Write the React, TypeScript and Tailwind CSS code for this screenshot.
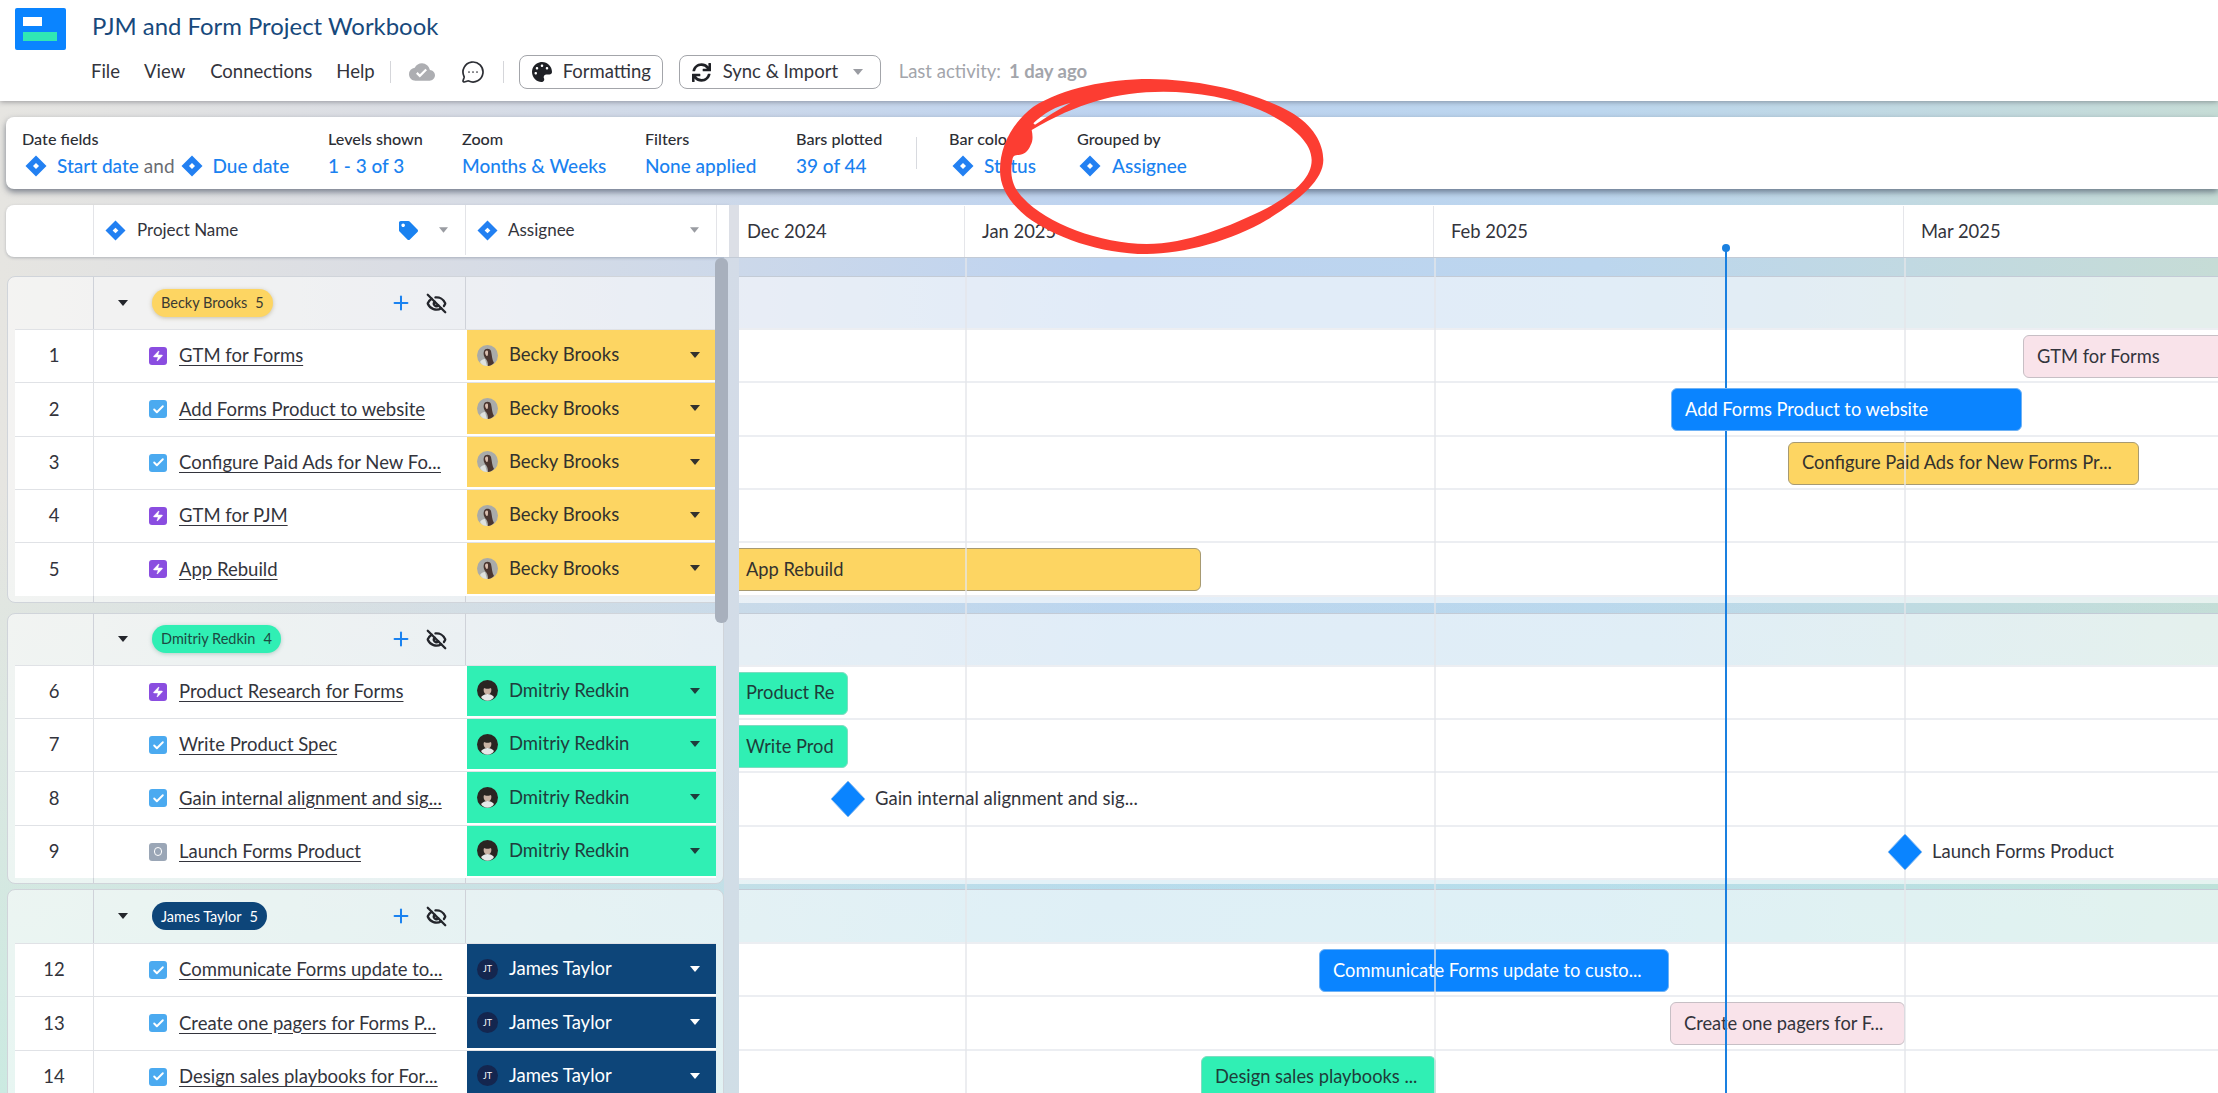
import React from "react";
import { Check, EyeOff, MessageCircleMore, Plus, Zap } from "lucide-react";
import { FaPalette, FaSync, FaTag } from "react-icons/fa";
import { MdCloudDone } from "react-icons/md";

function Diamond({ className }: { className: string }) {
  return (
    <svg viewBox="0 0 22 22" className={className}>
      <path d="M11 0.5 21.5 11 11 21.5 0.5 11Z" fill="#2280f2" />
      <path d="M11 8 14 11 11 14 8 11Z" fill="#fff" />
    </svg>
  );
}

function Caret({ className }: { className: string }) {
  return (
    <svg viewBox="0 0 10 6" className={className}>
      <path d="M0 0H10L5 6Z" fill="currentColor" />
    </svg>
  );
}

function Avatar({ who }: { who: string }) {
  if (who === "JT") {
    return (
      <div className="flex h-[21px] w-[21px] shrink-0 items-center justify-center rounded-full bg-[#14264f] text-[9px] text-white">
        JT
      </div>
    );
  }
  if (who === "BB") {
    return (
      <svg viewBox="0 0 21 21" className="h-[21px] w-[21px] shrink-0">
        <circle cx="10.500" cy="10.500" r="10.500" fill="#a9aba9" />
        <path d="M7 6c1-3 6-3 7 0 1 4 1 9 3 12-2 2-4 3-6 3 0-4-1-6-3-8-1-2-2-4-1-7Z" fill="#4a3630" />
        <path d="M8 7c1-2 3-2 3 0 0 2 0 4-1 4-1 0-2-2-2-4Z" fill="#d8bdae" />
        <path d="M3 17c1-2 3-3 5-3l2 7c-3 0-5-1-7-4Z" fill="#dfe2de" />
      </svg>
    );
  }
  return (
    <svg viewBox="0 0 21 21" className="h-[21px] w-[21px] shrink-0">
      <circle cx="10.500" cy="10.500" r="10.500" fill="#2a2522" />
      <path d="M7 8c1 1 6 1 7 0 1 2 0 5-1.500 6h-4C7 13 6 10 7 8Z" fill="#c9b2a4" />
      <path d="M4 17c2-2 4-3 6.500-3s5 1 6.500 3c-3 5-10 5-13 0Z" fill="#e6e8e8" />
    </svg>
  );
}

function RowIcon({ kind }: { kind: string }) {
  if (kind === "epic") {
    return (
      <div className="flex h-[18px] w-[18px] shrink-0 items-center justify-center rounded-[3px] bg-[#8a4de0]">
        <Zap className="h-[12px] w-[12px] text-white" fill="white" strokeWidth={1} />
      </div>
    );
  }
  if (kind === "task") {
    return (
      <div className="flex h-[18px] w-[18px] shrink-0 items-center justify-center rounded-[3px] bg-[#4baaf0]">
        <Check className="h-[13px] w-[13px] text-white" strokeWidth={3.5} />
      </div>
    );
  }
  return (
    <div className="flex h-[18px] w-[18px] shrink-0 items-center justify-center rounded-[3px] bg-[#9aa6b6]">
      <div className="h-[9px] w-[8px] rounded-full border-[1.5px] border-white" />
    </div>
  );
}

type Bar = { left: number; width: number; color: string; label: string } | { left: number; label: string; milestone: true };
type Row = { n: number; kind: string; title: string; bar?: Bar };
type Group = {
  name: string;
  count: number;
  cell: string;
  pill: string;
  who: string;
  headH: string;
  cardHead: string;
  cardFoot: string;
  ganttFoot: string;
  cardGap: string;
  gap: string;
  rows: Row[];
};

const blue = "bg-[#0a84ff] border-[#6fb2f5] text-white";
const yellow = "bg-[#fdd562] border-[#a79a72] text-[#33322e]";
const pink = "bg-[#f9e3ea] border-[#c7bfc5] text-[#33343c]";
const green = "bg-[#30efb4] border-[#7fdcc0] text-[#1e3d3a]";

const groups: Group[] = [
  {
    name: "Becky Brooks",
    count: 5,
    cell: "bg-[#fdd562] text-[#33322e]",
    pill: "bg-[#fdd562] text-[#3a3a32] shadow-[0_1px_4px_rgba(120,100,40,0.35)]",
    who: "BB",
    headH: "h-[52px]",
    cardHead: "h-[52px]",
    cardFoot: "h-[6px]",
    ganttFoot: "h-[8px]",
    cardGap: "mb-[10px]",
    gap: "h-[10px]",
    rows: [
      { n: 1, kind: "epic", title: "GTM for Forms", bar: { left: 1284, width: 260, color: pink, label: "GTM for Forms" } },
      { n: 2, kind: "task", title: "Add Forms Product to website", bar: { left: 932, width: 351, color: blue + " z-20", label: "Add Forms Product to website" } },
      { n: 3, kind: "task", title: "Configure Paid Ads for New Fo...", bar: { left: 1049, width: 351, color: yellow, label: "Configure Paid Ads for New Forms Pr..." } },
      { n: 4, kind: "epic", title: "GTM for PJM" },
      { n: 5, kind: "epic", title: "App Rebuild", bar: { left: -7, width: 469, color: yellow, label: "App Rebuild" } },
    ],
  },
  {
    name: "Dmitriy Redkin",
    count: 4,
    cell: "bg-[#30efb4] text-[#1f3d3c]",
    pill: "bg-[#30efb4] text-[#1c4a42] shadow-[0_1px_4px_rgba(40,120,100,0.3)]",
    who: "DR",
    headH: "h-[52px]",
    cardHead: "h-[51px]",
    cardFoot: "h-[5px]",
    ganttFoot: "h-[6px]",
    cardGap: "mb-[5px]",
    gap: "h-[5px]",
    rows: [
      { n: 6, kind: "epic", title: "Product Research for Forms", bar: { left: -7, width: 116, color: green, label: "Product Re" } },
      { n: 7, kind: "task", title: "Write Product Spec", bar: { left: -7, width: 116, color: green, label: "Write Prod" } },
      { n: 8, kind: "task", title: "Gain internal alignment and sig...", bar: { left: 91, label: "Gain internal alignment and sig...", milestone: true } },
      { n: 9, kind: "mile", title: "Launch Forms Product", bar: { left: 1148, label: "Launch Forms Product", milestone: true } },
    ],
  },
  {
    name: "James Taylor",
    count: 5,
    cell: "bg-[#0d4579] text-white",
    pill: "bg-[#0d4579] text-white",
    who: "JT",
    headH: "h-[53px]",
    cardHead: "h-[53px]",
    cardFoot: "h-[6px]",
    ganttFoot: "h-[8px]",
    cardGap: "mb-[5px]",
    gap: "h-[5px]",
    rows: [
      { n: 12, kind: "task", title: "Communicate Forms update to...", bar: { left: 580, width: 350, color: blue, label: "Communicate Forms update to custo..." } },
      { n: 13, kind: "task", title: "Create one pagers for Forms P...", bar: { left: 931, width: 235, color: pink, label: "Create one pagers for F..." } },
      { n: 14, kind: "task", title: "Design sales playbooks for For...", bar: { left: 462, width: 235, color: green, label: "Design sales playbooks ..." } },
    ],
  },
];

function Card({ g }: { g: Group }) {
  return (
    <div className={"shrink-0 " + g.cardGap}>
      <div className="w-[717px] overflow-hidden rounded-[8px] border border-[#d0d4da] bg-white/55">
        <div className={"flex " + g.cardHead}>
          <div className="w-[86px] shrink-0 border-r border-[#cfd2d9]" />
          <div className="flex w-[372px] shrink-0 items-center border-r border-[#cfd2d9]">
            <Caret className="ml-[24px] h-[6px] w-[10px] text-[#24262c]" />
            <div className={"ml-[24px] flex h-[28px] items-center gap-[8px] rounded-full px-[9px] text-[14.5px] " + g.pill}>
              <span>{g.name}</span>
              <span>{g.count}</span>
            </div>
            <div className="ml-auto flex items-center gap-[14px] pr-[18px]">
              <Plus className="h-[22px] w-[22px] text-[#1a82f0]" strokeWidth={2.2} />
              <EyeOff className="h-[21px] w-[21px] text-[#24262c]" strokeWidth={2.6} />
            </div>
          </div>
        </div>
        {g.rows.map((r) => (
          <div key={r.n} className="ml-[7px] flex h-[53.33px] w-[701px] border-t border-[#e0e2e6] bg-white text-[18.5px] text-[#33343c]">
            <div className="flex w-[79px] shrink-0 items-center justify-center border-r border-[#e0e2e6]">{r.n}</div>
            <div className="flex w-[372px] shrink-0 items-center pl-[55px]">
              <RowIcon kind={r.kind} />
              <span className="ml-[12px] whitespace-nowrap underline underline-offset-[3px]">{r.title}</span>
            </div>
            <div className={"ml-[1px] mb-[2px] flex w-[249px] shrink-0 items-center pl-[10px] pr-[16px] " + g.cell}>
              <Avatar who={g.who} />
              <span className="ml-[11px]">{g.name}</span>
              <Caret className="ml-auto h-[6px] w-[10px]" />
            </div>
          </div>
        ))}
        <div className={"flex " + g.cardFoot}>
          <div className="w-[86px] shrink-0 border-r border-[#cfd2d9]" />
          <div className="w-[372px] shrink-0 border-r border-[#cfd2d9]" />
        </div>
      </div>
    </div>
  );
}

function BarView({ b }: { b: Bar }) {
  if ("milestone" in b) {
    return (
      <div className="absolute top-0 z-10 flex h-full items-center text-[18.5px] whitespace-nowrap text-[#33343c]" style={{ left: b.left }}>
        <svg viewBox="0 0 36 38" className="h-[38px] w-[36px]">
          <path d="M18 1 35 19 18 37 1 19Z" fill="#0a84ff" stroke="#8dbdf0" strokeWidth="1" />
        </svg>
        <span className="ml-[9px]">{b.label}</span>
      </div>
    );
  }
  return (
    <div
      className={"absolute top-[5px] z-0 flex h-[43px] items-center overflow-hidden rounded-[6px] border pl-[13px] text-[18.3px] whitespace-nowrap " + b.color}
      style={{ left: b.left, width: b.width }}
    >
      {b.label}
    </div>
  );
}

function GanttGroup({ g }: { g: Group }) {
  return (
    <div>
      <div className={g.headH + " border-t border-[#c3cbd6] bg-white/55"} />
      {g.rows.map((r) => (
        <div key={r.n} className="relative h-[53.33px] border-t-2 border-[#eceef2] bg-white">
          {r.bar && <BarView b={r.bar} />}
        </div>
      ))}
      <div className={g.ganttFoot + " border-t-2 border-[#eceef2] bg-white/60"} />
      <div className={g.gap} />
    </div>
  );
}

function ToolItem({ w, label, children, extra }: { w: string; label: string; children: React.ReactNode; extra?: string }) {
  return (
    <div className={"shrink-0 " + w + " " + (extra || "")}>
      <div className="mt-[1px] mb-[5px] text-[16.2px] leading-[20px] font-medium text-[#2c2e34]">{label}</div>
      <div className="flex h-[24px] items-center text-[19px] font-medium text-[#1a82f0]">{children}</div>
    </div>
  );
}

export default function App() {
  return (
    <div className="relative h-[1093px] w-[2218px] overflow-hidden bg-[linear-gradient(180deg,rgba(190,245,225,0)_45%,rgba(170,240,225,0.45)_100%),linear-gradient(90deg,#e6e5e1_0%,#dadde4_18%,#bdd3f0_50%,#bcd6ee_72%,#c6dcd6_100%)] font-['Lato',sans-serif]">
      <header className="relative z-10 flex h-[101px] bg-white pl-[15px] shadow-[0_1px_5px_rgba(60,60,70,0.45)]">
        <div className="mt-[8px] h-[42px] w-[51px] shrink-0 rounded-[2px] bg-[#0a84ff] pt-[9px] pl-[8px]">
          <div className="h-[9px] w-[19px] bg-white" />
          <div className="mt-[6px] h-[9px] w-[34px] bg-[#30e8b4]" />
        </div>
        <div className="ml-[26px]">
          <div className="mt-[11px] text-[23.9px] leading-[30px] text-[#17497c]">PJM and Form Project Workbook</div>
          <div className="mt-[14px] flex h-[34px] items-center text-[18.5px] text-[#33343c]">
            <span className="-ml-px">File</span>
            <span className="ml-[24px]">View</span>
            <span className="ml-[25px]">Connections</span>
            <span className="ml-[24px]">Help</span>
            <div className="ml-[15px] h-[22px] w-px bg-[#d5d6da]" />
            <MdCloudDone className="ml-[18px] h-[26px] w-[26px] text-[#adaeb2]" />
            <MessageCircleMore className="ml-[26px] h-[24px] w-[24px] text-[#2c2e34]" strokeWidth={1.7} />
            <div className="ml-[18px] h-[22px] w-px bg-[#d5d6da]" />
            <div className="ml-[15px] flex h-[34px] w-[144px] items-center rounded-[8px] border border-[#a3a5aa] pl-[12px]">
              <FaPalette className="h-[20px] w-[20px] text-[#1f2126]" />
              <span className="ml-[11px]">Formatting</span>
            </div>
            <div className="ml-[16px] flex h-[34px] w-[202px] items-center rounded-[8px] border border-[#a3a5aa] pl-[12px]">
              <FaSync className="h-[19px] w-[19px] text-[#1f2126]" />
              <span className="ml-[12px]">Sync &amp; Import</span>
              <Caret className="ml-[15px] h-[6px] w-[10px] text-[#9a9ca2]" />
            </div>
            <span className="ml-[18px] text-[#a3a5ab]">Last activity:</span>
            <span className="ml-[8px] font-bold text-[#a3a5ab]">1 day ago</span>
          </div>
        </div>
      </header>

      <section className="ml-[6px] mt-[16px] flex h-[72px] items-center rounded-l-[8px] bg-white pl-[16px] shadow-[0_3px_6px_rgba(50,60,80,0.6)]">
        <ToolItem w="w-[306px]" label="Date fields">
          <Diamond className="ml-[3px] h-[22px] w-[22px]" />
          <span className="ml-[10px]">Start date</span>
          <span className="ml-[5px] font-normal text-[#6a6c72]">and</span>
          <Diamond className="ml-[6px] h-[22px] w-[22px]" />
          <span className="ml-[10px]">Due date</span>
        </ToolItem>
        <ToolItem w="w-[134px]" label="Levels shown">1 - 3 of 3</ToolItem>
        <ToolItem w="w-[183px]" label="Zoom">Months &amp; Weeks</ToolItem>
        <ToolItem w="w-[151px]" label="Filters">None applied</ToolItem>
        <ToolItem w="w-[120px]" label="Bars plotted">39 of 44</ToolItem>
        <div className="mr-[32px] h-[32px] w-px bg-[#d8dadf]" />
        <ToolItem w="w-[128px]" label="Bar color">
          <Diamond className="ml-[3px] h-[22px] w-[22px]" />
          <span className="ml-[10px]">Status</span>
        </ToolItem>
        <ToolItem w="w-[130px]" label="Grouped by">
          <Diamond className="ml-[2px] h-[22px] w-[22px]" />
          <span className="ml-[11px]">Assignee</span>
        </ToolItem>
      </section>

      <section className="mt-[16px] flex h-[52px] text-[17px] text-[#33343c]">
        <div className="ml-[6px] flex w-[723px] shrink-0 rounded-l-[8px] bg-white pb-[2px] shadow-[0_1px_3px_rgba(60,70,90,0.3)]">
          <div className="w-[88px] shrink-0 border-r border-[#e3e4e8]" />
          <div className="flex w-[372px] shrink-0 items-center border-r border-[#e3e4e8] pl-[11px]">
            <Diamond className="h-[21px] w-[21px]" />
            <span className="ml-[11px]">Project Name</span>
            <FaTag className="ml-auto h-[19px] w-[19px] text-[#1a82f0]" />
            <Caret className="ml-[21px] mr-[17px] h-[6px] w-[9px] text-[#9a9ca2]" />
          </div>
          <div className="flex w-[251px] shrink-0 items-center border-r border-[#e3e4e8] pl-[11px]">
            <Diamond className="h-[21px] w-[21px]" />
            <span className="ml-[10px]">Assignee</span>
            <Caret className="ml-auto mr-[17px] h-[6px] w-[9px] text-[#9a9ca2]" />
          </div>
        </div>
        <div className="w-[10px] shrink-0 bg-[#dcdfe6]" />
        <div className="flex flex-1 bg-white pt-[1px] text-[18.4px]">
          <div className="flex w-[226px] items-center border-r border-[#e5e6ea] pl-[8px]">Dec 2024</div>
          <div className="flex w-[469px] items-center border-r border-[#e5e6ea] pl-[17px]">Jan 2025</div>
          <div className="flex w-[470px] items-center border-r border-[#e5e6ea] pl-[17px]">Feb 2025</div>
          <div className="flex items-center pl-[17px]">Mar 2025</div>
        </div>
      </section>

      <section className="flex h-[836px] overflow-hidden">
        <div className="ml-[7px] w-[717px] shrink-0 pt-[19px]">
          {groups.map((g) => (
            <Card key={g.name} g={g} />
          ))}
        </div>
        <div className="w-[15px] shrink-0 border-t border-[#c3cbd6] bg-[#d4dce6]/80" />
        <div className="relative flex-1 overflow-hidden border-t border-[#c3cbd6] pt-[18px]">
          {groups.map((g) => (
            <GanttGroup key={g.name} g={g} />
          ))}
          <div className="absolute top-0 bottom-0 left-[226px] w-[2px] bg-[#e4e5ea]/70" />
          <div className="absolute top-0 bottom-0 left-[695px] w-[2px] bg-[#e4e5ea]/70" />
          <div className="absolute top-0 bottom-0 left-[1165px] w-[2px] bg-[#e4e5ea]/70" />
        </div>
      </section>

      <div className="absolute top-[258px] left-[715px] z-10 h-[365px] w-[13px] rounded-[6px] bg-[#a8b0bd]" />
      <div className="absolute top-[245px] bottom-0 left-[1725px] z-[5] w-[2px] bg-[#1a80e0]">
        <div className="absolute -top-[1px] -left-[3px] h-[8px] w-[8px] rounded-full bg-[#1a80e0]" />
      </div>

      <svg viewBox="0 0 1035 570" className="absolute top-[70px] left-[990px] z-30 h-[190px] w-[345px]">
        <path
          fill="#fc3d32"
          fillRule="evenodd"
          d="M480 27C640 28 800 70 900 125C970 165 1000 220 1000 270C1000 330 930 390 830 450C730 510 580 552 470 552C330 552 190 500 110 440C55 395 30 350 30 300C30 230 65 160 130 110C220 55 350 27 480 27ZM520 65C380 65 260 100 125 180C128 195 130 210 122 225C115 245 100 255 85 255C75 255 70 258 68 265C58 310 65 350 100 385C170 460 330 522 470 522C590 522 720 470 830 415C920 365 965 320 965 270C965 215 900 160 810 120C730 85 620 65 520 65ZM130 160C160 130 200 108 242 98C205 118 170 140 135 164Z"
        />
      </svg>
    </div>
  );
}
